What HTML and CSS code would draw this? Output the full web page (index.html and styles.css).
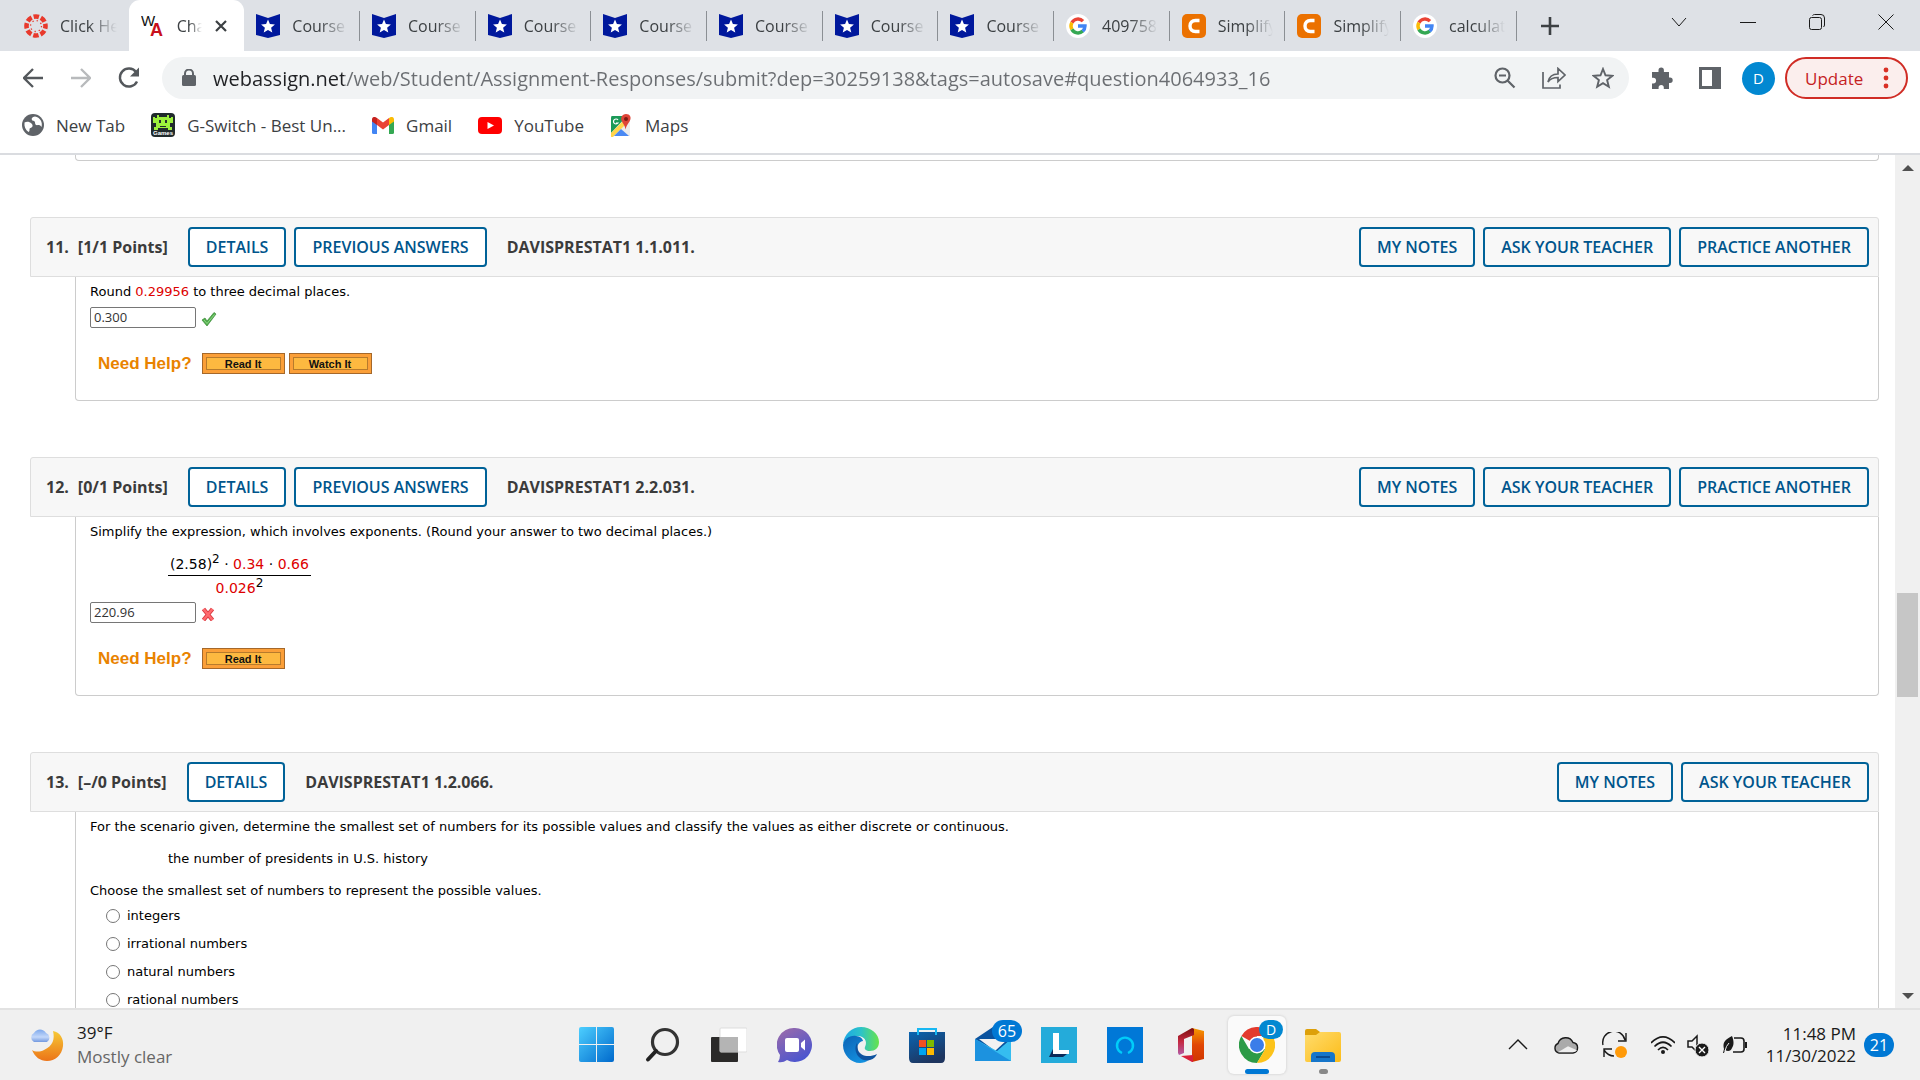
FILE: index.html
```
<!DOCTYPE html>
<html lang="en">
<head>
    <meta charset="UTF-8">
    <meta name="viewport" content="width=device-width, initial-scale=1.0">
    <title>WebAssign</title>
    <link rel="stylesheet" href="styles.css">
</head>
<body>
    <!-- Shared icons -->
    <svg class="icon-defs" aria-hidden="true">
        <symbol id="course" viewBox="0 0 24 24">
            <path d="M0 0l12 4L24 0v21l-12 3L0 21z" fill="#00189c"/>
            <path d="M12 5.5l1.9 4.6 5 .4-3.8 3.2 1.2 4.8-4.3-2.6-4.3 2.6 1.2-4.8-3.8-3.2 5-.4z" fill="#fff"/>
        </symbol>
        <symbol id="google" viewBox="0 0 24 24">
            <circle cx="12" cy="12" r="12" fill="#fff"/>
            <g fill="none" stroke-width="3.4">
                <path d="M5.9 8.6A7 7 0 0 1 17 7.1" stroke="#ea4335"/>
                <path d="M5.9 15.4a7 7 0 0 1 0-6.8" stroke="#fbbc05"/>
                <path d="M16.8 17.1A7 7 0 0 1 5.9 15.4" stroke="#34a853"/>
                <path d="M12 12h7a7 7 0 0 1-2.3 5.2" stroke="#4285f4"/>
            </g>
        </symbol>
        <symbol id="chegg" viewBox="0 0 24 24">
            <rect width="24" height="24" rx="5" fill="#eb7100"/>
            <path d="M17.5 6.5h-4c-3.4 0-5.5 2.2-5.5 5.5s2.100 5.500 5.500 5.500h4" fill="none" stroke="#fff" stroke-width="3.400"/>
        </symbol>
        <symbol id="check" viewBox="0 0 16 16">
            <path d="M1 10l3-2 2 3 7-8.500 2 1.500L6 16z" fill="#4fae4a" stroke="#3c8a3a" stroke-width=".7"/>
            <path d="M3 10l3 3.500L13.500 4.500" fill="none" stroke="#8fd487"/>
        </symbol>
        <symbol id="cross" viewBox="0 0 16 16">
            <path d="M2.500 4l9 11M11.500 4l-9 11" fill="none" stroke="#d93a41" stroke-width="4.200"/>
            <path d="M2.500 4l9 11M11.500 4l-9 11" fill="none" stroke="#ff6a6e" stroke-width="2.400"/>
        </symbol>
    </svg>

    <!-- Tab strip -->
    <header class="tab-strip">
        <div class="tabs">
            <div class="tab first">
                <svg class="favicon" viewBox="0 0 24 24">
                    <circle cx="12" cy="12" r="9.500" fill="none" stroke="#e8392c" stroke-width="4.600" stroke-dasharray="5.400 2.061" stroke-dashoffset="2.700"/>
                    <circle cx="12" cy="12" r="5.500" fill="none" stroke="#e8392c" stroke-width="1.300" stroke-dasharray="1.300 3.020"/>
                </svg>
                <span class="tab-title">Click Here</span>
            </div>
            <div class="tab active">
                <svg class="favicon" viewBox="0 0 24 24">
                    <text x="0" y="12" font-family="Liberation Sans" font-size="15" fill="#111">W</text>
                    <text x="9" y="22" font-family="Liberation Sans" font-size="18" font-weight="bold" fill="#c8101c">A</text>
                </svg>
                <span class="tab-title">Chapter</span>
                <button class="tab-close" aria-label="Close tab"><svg width="14" height="14" viewBox="0 0 14 14"><path d="M2 2l10 10M12 2L2 12" stroke="#3c4043" stroke-width="2.200"/></svg></button>
            </div>
            <div class="tab"><svg class="favicon"><use href="#course"/></svg><span class="tab-title">Course</span></div>
            <div class="tab"><svg class="favicon"><use href="#course"/></svg><span class="tab-title">Course</span></div>
            <div class="tab"><svg class="favicon"><use href="#course"/></svg><span class="tab-title">Course</span></div>
            <div class="tab"><svg class="favicon"><use href="#course"/></svg><span class="tab-title">Course</span></div>
            <div class="tab"><svg class="favicon"><use href="#course"/></svg><span class="tab-title">Course</span></div>
            <div class="tab"><svg class="favicon"><use href="#course"/></svg><span class="tab-title">Course</span></div>
            <div class="tab"><svg class="favicon"><use href="#course"/></svg><span class="tab-title">Course</span></div>
            <div class="tab"><svg class="favicon"><use href="#google"/></svg><span class="tab-title">409758</span></div>
            <div class="tab"><svg class="favicon"><use href="#chegg"/></svg><span class="tab-title">Simplify</span></div>
            <div class="tab"><svg class="favicon"><use href="#chegg"/></svg><span class="tab-title">Simplify</span></div>
            <div class="tab"><svg class="favicon"><use href="#google"/></svg><span class="tab-title">calculat</span></div>
        </div>
        <button class="new-tab" aria-label="New tab"><svg width="18" height="18" viewBox="0 0 18 18"><path d="M9 0v18M0 9h18" stroke="#3c4043" stroke-width="2.600"/></svg></button>
        <div class="window-controls">
            <button aria-label="Search tabs"><svg width="16" height="16" viewBox="0 0 16 16"><path d="M1 4l7 8 7-8"/></svg></button>
            <button aria-label="Minimize"><svg width="16" height="16" viewBox="0 0 16 16"><path d="M0 8.500h16"/></svg></button>
            <button aria-label="Restore"><svg width="16" height="16" viewBox="0 0 16 16"><rect x=".5" y="3.500" width="12" height="12" rx="2"/><path d="M3.500 1.500q1-1 2-1H12q3.500 0 3.500 3.500v7q0 1-1 2"/></svg></button>
            <button aria-label="Close"><svg width="16" height="16" viewBox="0 0 16 16"><path d="M.5.5l15 15M15.500.5l-15 15"/></svg></button>
        </div>
    </header>

    <!-- Toolbar -->
    <div class="toolbar">
        <button class="nav-button" aria-label="Back"><svg width="20" height="20" viewBox="0 0 20 20"><path d="M20 10H2M10 1l-9 9 9 9" fill="none" stroke="#54585c" stroke-width="2.300"/></svg></button>
        <button class="nav-button" aria-label="Forward"><svg width="20" height="20" viewBox="0 0 20 20"><path d="M0 10h18M10 1l9 9-9 9" fill="none" stroke="#b8babc" stroke-width="2.300"/></svg></button>
        <button class="nav-button" aria-label="Reload"><svg width="22" height="22" viewBox="0 0 22 22"><path d="M19 14.500A9 9 0 1 1 18 5" fill="none" stroke="#54585c" stroke-width="2.400"/><path d="M21 .5v9h-9z" fill="#54585c"/></svg></button>
        <div class="omnibox">
            <svg width="14" height="18" viewBox="0 0 14 18"><rect x="0" y="6" width="14" height="11" rx="1.500" fill="#5f6368"/><path d="M3 7V4.500a4 4 0 0 1 8 0V7" fill="none" stroke="#5f6368" stroke-width="2"/></svg>
            <input class="url" type="text" aria-label="Address" value="webassign.net/web/Student/Assignment-Responses/submit?dep=30259138&amp;tags=autosave#question4064933_16">
            <button aria-label="Zoom"><svg width="22" height="22" viewBox="0 0 22 22"><g fill="none" stroke="#5f6368" stroke-width="2.200"><circle cx="8.500" cy="8.500" r="7"/><path d="M13.500 13.500l7 7M5 8.500h7"/></g></svg></button>
            <button aria-label="Share"><svg width="24" height="22" viewBox="0 0 24 22"><path d="M1 5v16h17v-3.500M6 15c1-5 4-8 10-8V1.500l7 6.500-7 6.500V10.500c-5 0-8 1.500-10 4.500z" fill="none" stroke="#5f6368" stroke-width="1.700"/></svg></button>
            <button aria-label="Bookmark"><svg width="22" height="22" viewBox="0 0 22 22"><path d="M11 2l2.500 6.300 6.800.5-5.200 4.300 1.700 6.600-5.800-3.600-5.800 3.600 1.700-6.600-5.200-4.300 6.800-.5z" fill="none" stroke="#5f6368" stroke-width="1.900"/></svg></button>
        </div>
        <div class="toolbar-actions">
            <button aria-label="Extensions"><svg width="22" height="22" viewBox="0 0 22 22"><path d="M1 5h6.500V3.300a2.700 2.700 0 0 1 5.400 0V5H18v5.600h1a2.700 2.700 0 0 1 0 5.400h-1v6h-5.200v-1.500a2.600 2.600 0 0 0-5.200 0V22H1v-5.500h1.200a2.900 2.900 0 0 0 0-5.800H1z" fill="#5f6368"/></svg></button>
            <button aria-label="Side panel"><svg width="22" height="22" viewBox="0 0 22 22"><path d="M0 0h22v22H0zM3 3v16h10V3z" fill="#5f6368" fill-rule="evenodd"/></svg></button>
            <button class="avatar" aria-label="Profile">D</button>
        </div>
        <button class="update">Update <svg width="6" height="22" viewBox="0 0 6 22"><g fill="#d93025"><circle cx="3" cy="3" r="2.400"/><circle cx="3" cy="11" r="2.400"/><circle cx="3" cy="19" r="2.400"/></g></svg></button>
    </div>

    <!-- Bookmarks -->
    <nav class="bookmarks">
        <a href="#"><svg width="22" height="22" viewBox="0 0 22 22"><circle cx="11" cy="11" r="11" fill="#5f6368"/><path d="M2.500 8.500c2-1 5-1 7 1s1 4-1 4.500 0 3-2 4c-3-2-4.500-5.500-4-9.500zM13 2.500c-3 .5-4 2-3 3.500s3 .5 3 2.500 1 3 3 2.500 3 1 3.500 2c1.500-5-1.500-9.500-6.500-10.500z" fill="#fff"/></svg>New Tab</a>
        <a href="#"><svg width="24" height="24" viewBox="0 0 24 24"><rect width="24" height="24" rx="4" fill="#202a2c"/><path d="M6 2h2v2h8V2h2v3h2V4h2v6h-3v4h2v3h-4v-2H7v2H3v-3h2v-4H2V4h2v1h2z" fill="#9cf03c"/><path d="M8 7h2v3H8zM14 7h2v3h-2zM9 13h6v1H9z" fill="#202a2c"/><text x="12" y="22" text-anchor="middle" font-family="Liberation Sans" font-size="6" font-weight="bold" fill="#fff">Games</text></svg>G-Switch - Best Un...</a>
        <a href="#"><svg width="22" height="17" viewBox="0 0 22 17"><path d="M0 3v12.500Q0 17 1.500 17H5V7z" fill="#4285f4"/><path d="M22 3v12.500q0 1.500-1.500 1.500H17V7z" fill="#34a853"/><path d="M0 2.500C0 0 2.500-.8 4.500.7L5 1v7L0 4.500z" fill="#c5221f"/><path d="M22 2.500c0-2.500-2.500-3.300-4.500-1.800L17 1v7l5-3.500z" fill="#fbbc04"/><path d="M5 1l6 4.500L17 1v7l-6 4.500L5 8z" fill="#ea4335"/></svg>Gmail</a>
        <a href="#"><svg width="24" height="17" viewBox="0 0 24 17"><rect width="24" height="17" rx="4" fill="#f00"/><path d="M9.500 5v7l6.500-3.500z" fill="#fff"/></svg>YouTube</a>
        <a href="#"><svg width="23" height="23" viewBox="0 0 23 23"><path d="M1 2h19v20H1z" fill="#ececec"/><path d="M2 2h15L1 19V4q0-2 1-2z" fill="#1c9a58"/><path d="M1 19L13 7l3 3L3 23H1z" fill="#ffd54b"/><path d="M4 22l7-7 8 7z" fill="#4a89f3"/><path d="M16 0c-4 0-6 4-4 7.500 1.500 3 3 4 3.500 8 .8-4 2.500-5.500 4-8C22 3.500 20 0 16 0z" fill="#de4437"/><circle cx="16" cy="5" r="2" fill="#7c1b13"/><path d="M8 6a2.500 2.500 0 1 0 0 3H6" fill="none" stroke="#fff" stroke-width="1.200"/></svg>Maps</a>
    </nav>

    <div class="viewport">
        <main class="page">
            <section class="question">
                <div class="question-body cut-off"></div>
            </section>

            <section class="question">
                <div class="question-header">
                    <span class="number">11.</span>
                    <span class="points">[1/1 Points]</span>
                    <button class="wa-button">DETAILS</button>
                    <button class="wa-button">PREVIOUS ANSWERS</button>
                    <h2>DAVISPRESTAT1 1.1.011.</h2>
                    <div class="header-actions">
                        <button class="wa-button">MY NOTES</button>
                        <button class="wa-button">ASK YOUR TEACHER</button>
                        <button class="wa-button">PRACTICE ANOTHER</button>
                    </div>
                </div>
                <div class="question-body">
                    <p>Round <span class="red">0.29956</span> to three decimal places.</p>
                    <div class="answer after-text">
                        <input type="text" value="0.300" aria-label="Answer 11">
                        <svg width="16" height="16"><use href="#check"/></svg>
                    </div>
                    <div class="help">
                        <b>Need Help?</b>
                        <button>Read It</button>
                        <button>Watch It</button>
                    </div>
                </div>
            </section>

            <section class="question">
                <div class="question-header">
                    <span class="number">12.</span>
                    <span class="points">[0/1 Points]</span>
                    <button class="wa-button">DETAILS</button>
                    <button class="wa-button">PREVIOUS ANSWERS</button>
                    <h2>DAVISPRESTAT1 2.2.031.</h2>
                    <div class="header-actions">
                        <button class="wa-button">MY NOTES</button>
                        <button class="wa-button">ASK YOUR TEACHER</button>
                        <button class="wa-button">PRACTICE ANOTHER</button>
                    </div>
                </div>
                <div class="question-body">
                    <p>Simplify the expression, which involves exponents. (Round your answer to two decimal places.)</p>
                    <div class="fraction">
                        <div class="numerator">(2.58)<sup>2</sup> · <span class="red">0.34</span> · <span class="red">0.66</span></div>
                        <div class="denominator"><span class="red">0.026</span><sup>2</sup></div>
                    </div>
                    <div class="answer">
                        <input type="text" value="220.96" aria-label="Answer 12">
                        <svg width="16" height="16"><use href="#cross"/></svg>
                    </div>
                    <div class="help">
                        <b>Need Help?</b>
                        <button>Read It</button>
                    </div>
                </div>
            </section>

            <section class="question">
                <div class="question-header">
                    <span class="number">13.</span>
                    <span class="points">[–/0 Points]</span>
                    <button class="wa-button">DETAILS</button>
                    <h2>DAVISPRESTAT1 1.2.066.</h2>
                    <div class="header-actions">
                        <button class="wa-button">MY NOTES</button>
                        <button class="wa-button">ASK YOUR TEACHER</button>
                    </div>
                </div>
                <div class="question-body">
                    <p>For the scenario given, determine the smallest set of numbers for its possible values and classify the values as either discrete or continuous.</p>
                    <p class="indented">the number of presidents in U.S. history</p>
                    <p>Choose the smallest set of numbers to represent the possible values.</p>
                    <div class="choices">
                        <label><input type="radio" name="q13">integers</label>
                        <label><input type="radio" name="q13">irrational numbers</label>
                        <label><input type="radio" name="q13">natural numbers</label>
                        <label><input type="radio" name="q13">rational numbers</label>
                    </div>
                </div>
            </section>
        </main>
        <div class="scrollbar">
            <svg width="12" height="6" viewBox="0 0 12 6"><path d="M0 6l6-6 6 6z" fill="#505050"/></svg>
            <div class="track">
                <div class="thumb"></div>
            </div>
            <svg width="12" height="6" viewBox="0 0 12 6"><path d="M0 0l6 6 6-6z" fill="#505050"/></svg>
        </div>
    </div>

    <!-- Taskbar -->
    <footer class="taskbar">
        <div class="weather">
            <svg width="36" height="36" viewBox="0 0 36 36">
                <defs>
                    <linearGradient id="moon" x2="0" y2="1"><stop stop-color="#f6c935"/><stop offset="1" stop-color="#ec7418"/></linearGradient>
                    <linearGradient id="cloud" x2="0" y2="1"><stop stop-color="#7fa9ec"/><stop offset=".6" stop-color="#c3d8fa"/><stop offset="1" stop-color="#7399df"/></linearGradient>
                </defs>
                <path d="M24 4c7 1 11 8 10 15-1 9-8 15-16 15-7 0-12-4-15-11 3 2 8 2 12 0C24 19 26 12 24 4z" fill="url(#moon)"/>
                <path d="M5 15a5 5 0 0 1 0-9 7 7 0 0 1 12 0 5 5 0 0 1 1 9z" fill="url(#cloud)"/>
            </svg>
            <div>
                <div>39°F</div>
                <div class="condition">Mostly clear</div>
            </div>
        </div>
        <div class="apps">
            <button aria-label="Start"><svg width="36" height="36" viewBox="0 0 36 36"><defs><linearGradient id="win" x2="1" y2="1"><stop stop-color="#4dcfff"/><stop offset="1" stop-color="#0069cc"/></linearGradient></defs><path d="M2 0h15v17H0V2q0-2 2-2zM18 0h15q2 0 2 2v15H18zM0 18h17v17H2q-2 0-2-2zM18 18h17v15q0 2-2 2H18z" fill="url(#win)"/></svg></button>
            <button aria-label="Search"><svg width="36" height="36" viewBox="0 0 36 36"><circle cx="20" cy="15" r="12.500" fill="none" stroke="#333" stroke-width="3.200"/><path d="M11 24L3 32.500" stroke="#222" stroke-width="4" stroke-linecap="round"/></svg></button>
            <button aria-label="Task view"><svg width="36" height="36" viewBox="0 0 36 36"><rect x="0" y="10" width="27" height="25" rx="1" fill="#2b2a29"/><rect x="9" y="1" width="27" height="24" rx="1" fill="#fff" stroke="#ddd"/><rect x="9" y="10" width="18" height="15" fill="#b4b4b4"/></svg></button>
            <button aria-label="Chat"><svg width="36" height="36" viewBox="0 0 36 36"><defs><linearGradient id="chat" x2=".6" y2="1"><stop stop-color="#a06ca8"/><stop offset="1" stop-color="#4b55cf"/></linearGradient></defs><path d="M18 1a17 17 0 1 1-8 32q-4 3-9 2 2-3 2-7A17 17 0 0 1 18 1z" fill="url(#chat)"/><rect x="8" y="11" width="14" height="14" rx="2" fill="#fff"/><path d="M24 16l4-3.500v11L24 20z" fill="#fff"/></svg></button>
            <button aria-label="Edge"><svg width="36" height="36" viewBox="0 0 36 36"><defs><linearGradient id="edge1"><stop stop-color="#1ca6e6"/><stop offset=".5" stop-color="#2cc3c9"/><stop offset="1" stop-color="#67e34b"/></linearGradient><linearGradient id="edge2" x2=".6" y2="1"><stop stop-color="#0a62b5"/><stop offset="1" stop-color="#1490df"/></linearGradient></defs><path d="M0 17C1 7 9 0 18 0c10 0 18 7 18 15 0 6-4 9-9 9-4 0-6-2-5-4 3-6-1-11-7-11C9 9 3 12 0 17z" fill="url(#edge1)"/><path d="M0 18c1-6 7-10 13-9 4 0 7 3 7 5-3 0-6 4-6 8 0 7 6 12 12 11-3 2-6 3-9 3C8 36 0 28 0 18z" fill="url(#edge2)"/><path d="M14 16c-5 8 3 20 13 17 4-1 6-4 7-6-8 4-17 2-19-4z" fill="#0f539f"/></svg></button>
            <button aria-label="Store"><svg width="36" height="36" viewBox="0 0 36 36"><defs><linearGradient id="store" x2=".5" y2="1"><stop stop-color="#0a65b2"/><stop offset="1" stop-color="#1e355f"/></linearGradient></defs><path d="M0 5h36v26q0 5-4 5H4q-4 0-4-5z" fill="url(#store)"/><path d="M9 8V2h18v6" fill="none" stroke="#18b7f2" stroke-width="2"/><path d="M10 13h7v7h-7z" fill="#f25022"/><path d="M18 13h7v7h-7z" fill="#7fba00"/><path d="M10 21h7v7h-7z" fill="#00a4ef"/><path d="M18 21h7v7h-7z" fill="#ffb900"/></svg></button>
            <button aria-label="Mail"><svg width="36" height="36" viewBox="0 0 36 36"><path d="M0 12L18 0l18 12v20H0z" fill="#0a539f"/><path d="M4 12h29L20 24z" fill="#f2f2f2"/><path d="M0 12l22 12L36 12v22H0z" fill="#35bdf0"/><path d="M0 12l36 22H0z" fill="#1c92df"/></svg><span class="badge mail-badge">65</span></button>
            <button aria-label="LockDown"><svg width="36" height="36" viewBox="0 0 36 36"><path d="M0 0h36v36H0z" fill="#24abda"/><path d="M12 8v14L8 30h14l4-3H14z" fill="#0b2b5a"/><path d="M12 6h6v17h10v4H12z" fill="#fff"/></svg></button>
            <button aria-label="Alexa"><svg width="36" height="36" viewBox="0 0 36 36"><path d="M0 0h36v36H0z" fill="#0078d7"/><path d="M15 26a8 8 0 1 1 6 0" fill="none" stroke="#00cdf9" stroke-width="2.400"/></svg></button>
            <button aria-label="Office"><svg width="36" height="36" viewBox="0 0 36 36"><defs><linearGradient id="off" x2="0" y2="1"><stop stop-color="#f69a00"/><stop offset=".5" stop-color="#e14605"/><stop offset="1" stop-color="#cf3600"/></linearGradient><linearGradient id="off2" x2="0" y2="1"><stop stop-color="#7b0e0e"/><stop offset=".5" stop-color="#c52840"/><stop offset="1" stop-color="#b35ba6"/></linearGradient></defs><path d="M19 1l12 3v28l-12 3z" fill="url(#off)"/><path d="M5 9L19 1l2 1v6l-10 4v14l-5 2-1-2z" fill="url(#off2)"/><path d="M8 29l12-1v7h-1z" fill="#d9203b"/></svg></button>
            <button class="running" aria-label="Chrome"><svg width="36" height="36" viewBox="0 0 36 36"><path d="M2.400 9a18 18 0 0 1 31.200 0H18v9z" fill="#e33b2e"/><path d="M2.400 9a18 18 0 0 0 15.600 27l8-13.500L18 18l-8 4z" fill="#2c9b47"/><path d="M33.600 9A18 18 0 0 1 18 36l8-13.500L24 9z" fill="#fcc31a"/><circle cx="18" cy="18" r="8.500" fill="#fff"/><circle cx="18" cy="18" r="7" fill="#3b7de9"/></svg><span class="badge chrome-badge">D</span><i class="indicator"></i></button>
            <button aria-label="File Explorer"><svg width="36" height="36" viewBox="0 0 36 36"><defs><linearGradient id="fold" x2="1" y2="1"><stop stop-color="#ffdc6d"/><stop offset="1" stop-color="#fcbc19"/></linearGradient></defs><path d="M0 4q0-2 2-2h9l4 3v4H0z" fill="#dda00a"/><path d="M0 8h11l4-3h19q2 0 2 2v26q0 2-2 2H2q-2 0-2-2z" fill="url(#fold)"/><path d="M6 35v-6q0-4 4-4h16q4 0 4 4v6z" fill="#1676ca"/><path d="M11 30h14" stroke="#0b4b91" stroke-width="2"/></svg><i class="indicator idle"></i></button>
        </div>
        <div class="tray">
            <button aria-label="Show hidden icons"><svg width="24" height="24" viewBox="0 0 24 24"><path d="M3 16l9-9 9 9" fill="none" stroke="#1a1a1a" stroke-width="1.400"/></svg></button>
            <button aria-label="OneDrive"><svg width="26" height="24" viewBox="0 0 26 24"><path d="M6 20a5 5 0 0 1-1-9.500 8 8 0 0 1 15-1 5.300 5.300 0 0 1 0 10.500z" fill="#aaa" stroke="#1a1a1a" stroke-width="1.400"/><path d="M5 19.300l10-6 9 4q-1.500 2-4 2z" fill="#eee"/></svg></button>
            <button aria-label="Updates"><svg width="26" height="26" viewBox="0 0 26 26"><path d="M1 13A11 11 0 0 1 23 8M24 1v8h-8M2 25v-8h8M2 18q4 6 10 6" fill="none" stroke="#1a1a1a" stroke-width="1.400"/><circle cx="19" cy="20" r="6" fill="#ff9a09"/></svg></button>
            <button class="quick-settings" aria-label="Network, volume and battery">
                <svg width="24" height="24" viewBox="0 0 24 24"><g fill="none" stroke="#1a1a1a" stroke-width="1.700"><path d="M0 10q12-12 24 0M3.500 13.500q8.500-8.500 17 0M7 17q5-5 10 0"/></g><circle cx="12" cy="19" r="2" fill="#1a1a1a"/></svg>
                <svg width="24" height="24" viewBox="0 0 24 24"><path d="M1 8h4l5-5v16l-5-5H1z" fill="none" stroke="#1a1a1a" stroke-width="1.500"/><circle cx="15" cy="17" r="7" fill="#1a1a1a" stroke="#f0f0f0"/><path d="M12 14l6 6M18 14l-6 6" stroke="#fff" stroke-width="1.400"/></svg>
                <svg width="24" height="24" viewBox="0 0 24 24"><path d="M11 5h7q3 0 3 3v8q0 3-3 3h-8" fill="none" stroke="#1a1a1a" stroke-width="1.600"/><path d="M22 9h2v6h-2zM1 16C-1 9 3 6 9 3c2 5 2 9 0 12-1 3-4 4-7 2l-1 3H0z" fill="#1a1a1a"/><path d="M2 18q1-5 4-8" fill="none" stroke="#f0f0f0"/></svg>
            </button>
            <div class="clock">11:48 PM<br>11/30/2022</div>
            <span class="badge notifications">21</span>
        </div>
    </footer>
</body>
</html>
```
FILE: styles.css
```
* {
    box-sizing: border-box;
}

body {
    margin: 0;
    height: 100vh;
    display: flex;
    flex-direction: column;
    overflow: hidden;
    background: #fff;
    font-family: "Open Sans", sans-serif;
    color: #3c4043;
}

button {
    font-family: inherit;
    padding: 0;
    border: none;
    background: none;
    cursor: pointer;
}

svg {
    display: block;
    flex-shrink: 0;
}

.icon-defs {
    display: none;
}

/* Tab strip */
.tab-strip {
    display: flex;
    height: 51px;
    background: #dee1e6;
}

.tabs {
    display: flex;
    width: 79vw;
}

.tab {
    flex: 1 1 0;
    min-width: 0;
    display: flex;
    align-items: center;
    gap: 12px;
    padding: 0 12px;
    background: linear-gradient(#8b8f94, #8b8f94) right center / 1px 30px no-repeat;
}

.tab.first {
    flex-basis: 37px;
    padding-left: 24px;
    background: none;
}

.tab.active {
    background: #fff;
    border-radius: 11px 11px 0 0;
}

.tab-close {
    margin-right: 4px;
}

.favicon {
    width: 24px;
    height: 24px;
}

.tab-title {
    flex: 1;
    min-width: 0;
    overflow: hidden;
    white-space: nowrap;
    font-size: 16px;
    mask-image: linear-gradient(to right, #000 50%, transparent);
}

.new-tab {
    padding: 0 24px;
}

.window-controls {
    display: flex;
    align-items: center;
    gap: 53px;
    margin-left: auto;
    padding: 0 26px 8px 0;
}

.window-controls svg {
    fill: none;
    stroke: #1a1a1a;
}

/* Toolbar */
.toolbar {
    display: flex;
    align-items: center;
    padding: 6px 12px 6px 9px;
}

.nav-button {
    width: 48px;
    display: flex;
    justify-content: center;
}

.omnibox {
    flex: 1;
    display: flex;
    align-items: center;
    gap: 26px;
    height: 42px;
    margin-left: 9px;
    padding: 0 15px 0 20px;
    border-radius: 21px;
    background: #f1f3f4;
}

.url {
    flex: 1;
    min-width: 0;
    margin-left: -9px;
    padding: 0;
    border: none;
    outline: none;
    font: 20px "Open Sans", sans-serif;
    color: transparent;
    background: linear-gradient(to right, #202124 131px, #6b6e72 131px);
    background-clip: text;
    -webkit-background-clip: text;
}

.toolbar-actions {
    display: flex;
    align-items: center;
    gap: 26px;
    padding: 0 10px 0 22px;
}

.avatar {
    width: 33px;
    height: 33px;
    margin-left: -5px;
    border-radius: 50%;
    background: #0288d1;
    color: #fff;
    font-size: 15px;
}

.update {
    display: flex;
    align-items: center;
    justify-content: space-between;
    width: 123px;
    height: 42px;
    padding: 0 17px 0 18px;
    border: 2px solid #d02c25;
    border-radius: 21px;
    background: #fbeeed;
    color: #c5221f;
    font-size: 17px;
}

/* Bookmarks */
.bookmarks {
    display: flex;
    align-items: center;
    gap: 26px;
    height: 50px;
    padding: 0 22px 8px;
    border-bottom: 2px solid #dadce0;
}

.bookmarks a {
    display: flex;
    align-items: center;
    gap: 12px;
    color: #3c4043;
    font-size: 17px;
    text-decoration: none;
}

/* Assignment page */
.viewport {
    flex: 1;
    min-height: 0;
    display: flex;
}

.page {
    flex: 1;
    min-width: 0;
    overflow: hidden;
    padding: 0 16px 0 30px;
}

.question {
    margin-bottom: 56px;
}

.question-header {
    display: flex;
    align-items: center;
    height: 60px;
    padding: 0 9px 0 15px;
    border: 1px solid #dedede;
    border-radius: 3px 3px 0 0;
    background: #f7f7f7;
    color: #3b3b3b;
    font-size: 16px;
    font-weight: 700;
}

.points {
    margin: 0 20px 0 9px;
}

.question-header h2 {
    margin: 0 0 0 12px;
    font-size: 16px;
}

.wa-button {
    height: 40px;
    margin-right: 8px;
    padding: 0 16px;
    border: 2px solid #006298;
    border-radius: 4px;
    background: #fff;
    color: #00558c;
    font-size: 16px;
    font-weight: 600;
}

.header-actions {
    margin-left: auto;
    display: flex;
    gap: 8px;
}

.header-actions .wa-button {
    margin-right: 0;
    background: #f8f8f8;
}

.question-body {
    margin-left: 45px;
    padding: 5px 14px 26px;
    border: 1px solid #ccc;
    border-top: none;
    border-radius: 0 0 4px 4px;
    color: #000;
    font: 13px/20px "DejaVu Sans", sans-serif;
}

.cut-off {
    height: 6px;
    padding: 0;
}

.question-body p {
    margin: 0 0 12px;
}

.question-body .indented {
    margin-left: 78px;
}

.red {
    color: #d00;
}

.answer {
    display: flex;
    align-items: center;
    gap: 5px;
}

.answer.after-text {
    margin-top: -7px;
}

.answer input {
    width: 106px;
    height: 21px;
    padding: 0 3px 1px;
    border: 1px solid #767676;
    border-radius: 2px;
    color: #333;
    font: 13px "Open Sans", sans-serif;
}

.help {
    display: flex;
    align-items: center;
    gap: 4px;
    margin-top: 25px;
    padding-left: 8px;
}

.help b {
    margin-right: 6px;
    color: #e98300;
    font: bold 17px/20px "Liberation Sans", sans-serif;
}

.help button {
    width: 83px;
    height: 21px;
    border: 1px solid #a5682a;
    background: #fdb940;
    box-shadow: inset 0 0 0 3px #fb9f38, inset 0 0 0 4px #b77b2c;
    color: #111;
    font: bold 11px "Liberation Sans", sans-serif;
}

.fraction {
    width: max-content;
    margin: 0 0 3px 78px;
    font-size: 14px;
    text-align: center;
}

.fraction sup {
    font-size: 12px;
    line-height: 0;
}

.numerator {
    height: 22px;
    padding: 0 2px;
    border-bottom: 1px solid #000;
    line-height: 20px;
}

.denominator {
    height: 23px;
    line-height: 24px;
}

.choices {
    margin-top: -11px;
    padding-left: 16px;
}

.choices label {
    display: flex;
    align-items: center;
    gap: 7px;
    height: 28px;
}

.choices input {
    width: 14px;
    height: 14px;
    margin: 0;
}

.scrollbar {
    width: 25px;
    display: flex;
    flex-direction: column;
    align-items: center;
    padding: 10px 0 9px;
    background: #f0f0f0;
}

.track {
    flex: 1;
    width: 21px;
    padding: 9px 0;
    display: grid;
    grid-template-rows: 412fr 104fr 287fr;
}

.thumb {
    grid-row: 2;
    background: #c6c6c6;
}

/* Taskbar */
.taskbar {
    display: grid;
    grid-template-columns: 1fr auto 1fr;
    align-items: center;
    height: 72px;
    border-top: 2px solid #e2e2e2;
    background: #f0f0f0;
    color: #1a1a1a;
    font-size: 17px;
    line-height: 24px;
}

.weather {
    display: flex;
    align-items: center;
    gap: 12px;
    padding-left: 29px;
}

.condition {
    color: #666;
}

.apps {
    display: flex;
}

.apps button {
    position: relative;
    width: 58px;
    height: 58px;
    margin: 0 4px;
    display: flex;
    align-items: center;
    justify-content: center;
}

.apps .running {
    border-radius: 6px;
    background: #fafafa;
    box-shadow: 0 0 2px 1px #ddd;
}

.badge {
    border-radius: 12px;
    background: #0078d4;
    color: #fff;
    text-align: center;
}

.mail-badge {
    position: absolute;
    top: 4px;
    right: 0;
    width: 30px;
    font-size: 16px;
}

.chrome-badge {
    position: absolute;
    top: 4px;
    right: 3px;
    width: 24px;
    background: #0288d1;
    font-size: 14px;
}

.indicator {
    position: absolute;
    bottom: 0;
    width: 24px;
    height: 5px;
    border-radius: 3px;
    background: #0078d4;
}

.indicator.idle {
    width: 9px;
    background: #888;
}

.tray {
    display: flex;
    align-items: center;
    justify-content: flex-end;
    gap: 23px;
    padding-right: 26px;
}

.quick-settings {
    display: flex;
    gap: 12px;
}

.clock {
    margin-left: -4px;
    text-align: right;
    font-size: 17px;
    line-height: 22px;
}

.notifications {
    width: 30px;
    margin-left: -15px;
    font-size: 16px;
}
```
